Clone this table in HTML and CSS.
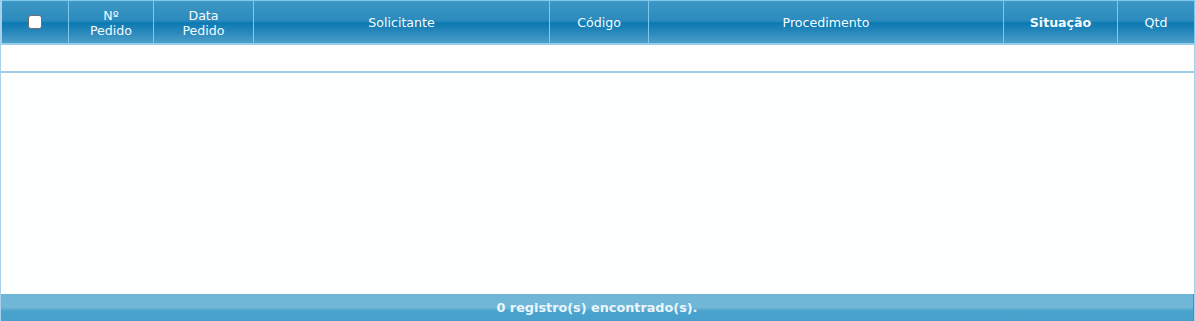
FILE: index.html
```html
<!DOCTYPE html>
<html lang="pt">
<head>
<meta charset="utf-8">
<link rel="stylesheet" href="styles.css">
</head>
<body>
<div class="grid">
  <table class="head">
    <colgroup>
      <col class="c1"><col class="c2"><col class="c3"><col class="c4"><col class="c5"><col class="c6"><col class="c7"><col class="c8">
    </colgroup>
    <tr>
      <th><span class="chk"></span></th>
      <th>Nº<br>Pedido</th>
      <th>Data<br>Pedido</th>
      <th>Solicitante</th>
      <th>Código</th>
      <th>Procedimento</th>
      <th class="b">Situação</th>
      <th>Qtd</th>
    </tr>
  </table>
  <div class="emptyrow"></div>
  <div class="body"></div>
  <div class="foot">0 registro(s) encontrado(s).</div>
</div>
</body>
</html>
```
FILE: styles.css
```css
html, body { margin: 0; padding: 0; background: #fdfefe; }
.grid {
  width: 1195px;
  height: 321px;
  box-sizing: border-box;
  border-left: 1px solid #a9d0ea;
  border-right: 1px solid #a9d0ea;
  display: flex;
  flex-direction: column;
  font-family: "DejaVu Sans", Verdana, sans-serif;
  background: #fdfefe;
}
.head {
  border-collapse: collapse;
  table-layout: fixed;
  width: 1193px;
  height: 45px;
  border-top: 1px solid #7dc9ee;
  border-bottom: 2px solid #95cdec;
}
.c1 { width: 67px; } .c2 { width: 85px; } .c3 { width: 100px; } .c4 { width: 296px; }
.c5 { width: 99px; } .c6 { width: 355px; } .c7 { width: 114px; } .c8 { width: 77px; }
.head th {
  padding: 1px 0 0 0;
  height: 41px;
  color: #f4fbff;
  font-weight: normal;
  font-size: 12.6px;
  line-height: 15px;
  text-align: center;
  vertical-align: middle;
  border-left: 1px solid #7dc9ee;
  background: linear-gradient(#3b96c4 0%, #2b8bbc 47%, #0a79b1 50%, #2787bb 72%, #4e9fc9 100%);
}
.head th:first-child { border-left: 1px solid #a9d0ea; }
.head th:last-child { border-right: 1px solid #7dc9ee; }
.head th.b { font-weight: bold; }
.chk {
  display: inline-block;
  width: 12px;
  height: 12px;
  border: 1px solid #6e6e6e;
  border-radius: 3px;
  background: #ffffff;
  vertical-align: middle;
  margin-top: -3px;
}
.emptyrow {
  height: 26px;
  background: #fefefe;
  border-bottom: 2px solid #a2cde9;
}
.body { flex: 1; background: #fdfefe; }
.foot {
  height: 27px;
  line-height: 27px;
  text-align: center;
  color: #eaf6fc;
  font-size: 12.8px;
  font-weight: bold;
  background: linear-gradient(#70b6d7 0%, #70b6d7 50%, #4aa3cd 62%, #47a1cc 100%);
  border-right: 1px solid #3a8fd6;
}
```
